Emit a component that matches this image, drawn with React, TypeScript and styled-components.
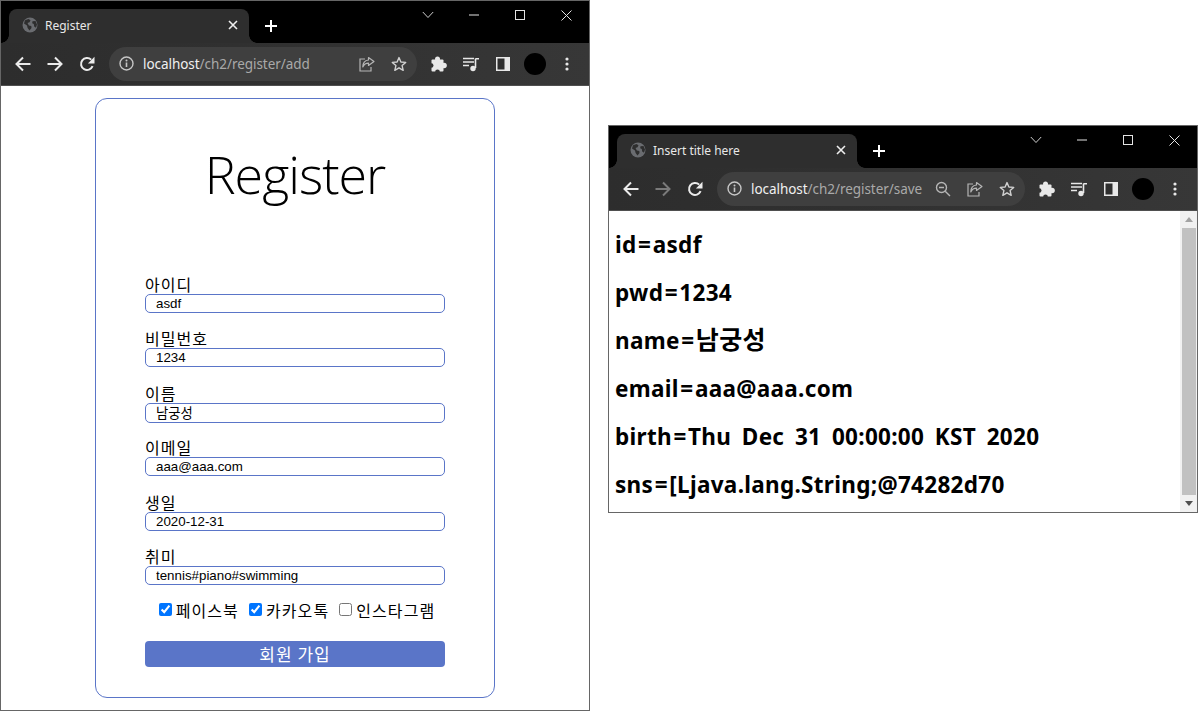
import React from "react";
import styled, { createGlobalStyle } from "styled-components";

const Global = createGlobalStyle`
  html, body { margin: 0; padding: 0; background: #fff; }
  body { width: 1199px; height: 711px; overflow: hidden; font-family: "Noto Sans", "Noto Sans CJK KR", sans-serif; }
  * { box-sizing: border-box; }
`;

const Desktop = styled.div`
  position: relative;
  width: 1199px;
  height: 711px;
  background: #fff;
  overflow: hidden;
`;

const Win = styled.section<{ $x: number; $y: number; $w: number; $h: number }>`
  position: absolute;
  left: ${(p) => p.$x}px;
  top: ${(p) => p.$y}px;
  width: ${(p) => p.$w}px;
  height: ${(p) => p.$h}px;
  display: flex;
  flex-direction: column;
  background: #fff;
  &::after {
    content: "";
    position: absolute;
    inset: 0;
    border: 1px solid #666;
    pointer-events: none;
  }
`;

const TabBar = styled.header`
  height: 43px;
  flex: none;
  background: #000;
  display: flex;
  align-items: flex-end;
  padding-left: 9px;
`;

const Tab = styled.div`
  position: relative;
  width: 240px;
  height: 34px;
  background: #2e2e2e;
  border-radius: 8px 8px 0 0;
  display: flex;
  align-items: center;
  padding: 0 8px 2px 13px;
  color: #e8e8e8;
  font: 12px "Noto Sans", sans-serif;
  &::before, &::after {
    content: "";
    position: absolute;
    bottom: 0;
    width: 8px;
    height: 8px;
  }
  &::before { left: -8px; background: radial-gradient(circle at 0 0, #000 7.5px, #2e2e2e 8px); }
  &::after { right: -8px; background: radial-gradient(circle at 100% 0, #000 7.5px, #2e2e2e 8px); }
`;

const TabTitle = styled.span`
  flex: 1;
  margin-left: 7px;
  white-space: nowrap;
`;

const NewTab = styled.div`
  width: 16px;
  height: 16px;
  margin: 0 0 9px 14px;
  color: #fff;
  display: flex;
`;

const Spacer = styled.div`
  flex: 1;
`;

const WinControls = styled.div`
  align-self: flex-start;
  display: flex;
  margin-right: 1px;
`;

const WinBtn = styled.div`
  width: 46px;
  height: 30px;
  display: flex;
  align-items: center;
  justify-content: center;
  color: #e4e4e4;
`;

const Toolbar = styled.nav`
  height: 43px;
  flex: none;
  display: flex;
  align-items: center;
  padding: 0 0 1px 7px;
  background: linear-gradient(90deg, #2d2d2d 0%, #303030 40%, #373737 100%);
  border-bottom: 1px solid #4f4f4f;
`;

const NavBtn = styled.div<{ $dim?: boolean }>`
  width: 32px;
  height: 32px;
  flex: none;
  display: flex;
  align-items: center;
  justify-content: center;
  color: ${(p) => (p.$dim ? "#7a7a7a" : "#ebebeb")};
`;

const ExtBtn = styled(NavBtn)`
  margin-left: 6px;
`;

const Omnibox = styled.div`
  width: 308px;
  height: 34px;
  margin: 0 0 0 6px;
  flex: none;
  border-radius: 17px;
  background: #3f3f3f;
  display: flex;
  align-items: center;
  padding: 0 2px 0 8px;
  overflow: hidden;
`;

const OmniIcon = styled.div`
  width: 18px;
  flex: none;
  display: flex;
  justify-content: center;
  color: #c6c6c6;
`;

const Url = styled.div`
  flex: 1;
  margin-left: 8px;
  font: 13.5px "Noto Sans", sans-serif;
  letter-spacing: -0.05px;
  color: #a9a9a9;
  white-space: nowrap;
  overflow: hidden;
`;

const Host = styled.span`
  color: #f0f0f0;
`;

const Trail = styled.div`
  width: 32px;
  flex: none;
  display: flex;
  justify-content: center;
  color: #b5b5b5;
`;

const Avatar = styled.div`
  width: 22px;
  height: 22px;
  margin: 0 5px;
  flex: none;
  border-radius: 50%;
  background: #000;
`;

const Page = styled.main`
  flex: 1;
  min-height: 0;
  display: flex;
  justify-content: center;
  align-items: flex-start;
  padding-top: 12px;
`;

const Card = styled.form`
  width: 400px;
  height: 600px;
  border: 1px solid #5a75c8;
  border-radius: 12px;
  padding: 0 49px;
  display: flex;
  flex-direction: column;
`;

const Title = styled.h1`
  margin: 38px 0 0;
  height: 73px;
  text-align: center;
  font: 300 52px/73px "Open Sans", "Noto Sans", sans-serif;
  letter-spacing: -1px;
  color: #000;
`;

const Fields = styled.div`
  margin-top: 64px;
  display: flex;
  flex-direction: column;
  gap: 15.4px;
`;

const Field = styled.label`
  display: flex;
  flex-direction: column;
  height: 39px;
  font: 16px/20px "Noto Sans CJK KR", sans-serif;
  letter-spacing: 1px;
  color: #000;
`;

const Input = styled.input<{ $tall?: boolean }>`
  width: 300px;
  height: ${(p) => (p.$tall ? 20 : 19)}px;
  flex: none;
  border: 1px solid #5a75c8;
  border-radius: 5px;
  padding: 0 0 0 10px;
  outline: none;
  background: #fff;
  color: #000;
  font: 13.33px "Liberation Sans", "Noto Sans CJK KR", sans-serif;
  letter-spacing: 0;
`;

const Checks = styled.div`
  margin-top: 14px;
  height: 22px;
  padding-left: 4px;
  display: flex;
  justify-content: center;
  align-items: center;
  gap: 10px;
  font: 16px/22px "Noto Sans CJK KR", sans-serif;
  letter-spacing: 1.1px;
`;

const Check = styled.label`
  display: flex;
  align-items: center;
  gap: 4px;
  white-space: nowrap;
`;

const Box = styled.input`
  width: 13px;
  height: 13px;
  margin: 0;
`;

const Submit = styled.button`
  margin-top: 20px;
  width: 300px;
  height: 26px;
  border: 0;
  border-radius: 4px;
  padding: 0;
  background: #5a75c8;
  color: #fff;
  font: 17px/26px "Noto Sans CJK KR", sans-serif;
  letter-spacing: 1px;
`;

const Result = styled.main`
  flex: 1;
  min-height: 0;
  display: flex;
  padding-right: 1px;
  padding-bottom: 1px;
`;

const Output = styled.div`
  flex: 1;
  padding: 10px 0 0 7px;
  display: flex;
  flex-direction: column;
`;

const Line = styled.h3`
  margin: 0;
  height: 48px;
  font: 700 22.5px/48px "Noto Sans", "Noto Sans CJK KR", sans-serif;
  letter-spacing: 0.3px;
  word-spacing: 4.5px;
  white-space: nowrap;
  color: #000;
`;

const Eq = styled.span`
  margin: 0 1.5px;
`;

const Ko = styled.span`
  font-size: 25px;
  line-height: 0;
  font-family: "Noto Sans CJK KR", sans-serif;
`;

const Scrollbar = styled.div`
  width: 17px;
  flex: none;
  background: #f1f1f1;
  display: flex;
  flex-direction: column;
`;

const ArrowBox = styled.div`
  height: 17px;
  flex: none;
  display: flex;
  align-items: center;
  justify-content: center;
`;

const Thumb = styled.div`
  flex: 1;
  background: #c1c1c1;
  margin: 0 1px 0 2px;
`;

const Globe = () => (
  <svg width="16" height="16" viewBox="0 0 16 16">
    <circle cx="8" cy="8" r="7.5" fill="#6a6c70" />
    <path d="M3 3.2 6.5 2l2 1.2-1 2-2 .8 1.4 2.4 2.4.6.2 2-2 2.6L5.6 11 5 8.6 2 6.4zM10.5 4.2l3-.2 1.5 3.5-1 3.2-1.8-1.2-.4-2.5-1.6-.8z" fill="#2e2e2e" />
  </svg>
);

const CloseSmall = () => (
  <svg width="16" height="16" viewBox="0 0 16 16" style={{ color: "#eee" }}>
    <path d="M4 4l8 8M12 4l-8 8" stroke="currentColor" strokeWidth="1.6" />
  </svg>
);

const Plus = () => (
  <svg width="16" height="16" viewBox="0 0 16 16">
    <path d="M8 2v12M2 8h12" stroke="currentColor" strokeWidth="2" />
  </svg>
);

const Back = () => (
  <svg width="18" height="18" viewBox="0 0 18 18" fill="none">
    <path d="M16.5 9H2.5M9 2.5 2.5 9 9 15.5" stroke="currentColor" strokeWidth="2" />
  </svg>
);

const Forward = () => (
  <svg width="18" height="18" viewBox="0 0 18 18" fill="none">
    <path d="M1.5 9h14M9 2.5 15.5 9 9 15.5" stroke="currentColor" strokeWidth="2" />
  </svg>
);

const Reload = () => (
  <svg width="16" height="16" viewBox="0 0 16 16" fill="none">
    <path d="M13.6 10.2A6 6 0 1 1 12.2 3.600" stroke="currentColor" strokeWidth="2" />
    <path d="M15.500 .8v6.600H8.900z" fill="currentColor" />
  </svg>
);

const Info = () => (
  <svg width="15" height="15" viewBox="0 0 15 15" fill="none">
    <circle cx="7.5" cy="7.5" r="6.5" stroke="currentColor" strokeWidth="1.4" />
    <path d="M7.5 6.6v4.4" stroke="currentColor" strokeWidth="1.6" />
    <circle cx="7.5" cy="4.4" r="1" fill="currentColor" />
  </svg>
);

const Search = () => (
  <svg width="16" height="16" viewBox="0 0 16 16" fill="none">
    <circle cx="6.5" cy="6.5" r="5" stroke="currentColor" strokeWidth="1.4" />
    <path d="M10.2 10.2 15 15M4 6.5h5" stroke="currentColor" strokeWidth="1.4" />
  </svg>
);

const Share = () => (
  <svg width="16" height="16" viewBox="0 0 16 16" fill="none">
    <path d="M6 3H1v12h11v-4" stroke="currentColor" strokeWidth="1.2" />
    <path d="M9.5 1.5 15 5.4 9.5 9.4V7.2C7 7.2 5 8.4 3.8 11c0-4 2-6.6 5.7-7z" stroke="currentColor" strokeWidth="1.2" strokeLinejoin="round" />
  </svg>
);

const Star = () => (
  <svg width="16" height="16" viewBox="0 0 16 16" fill="none">
    <path d="M8 1.6l1.9 4.4 4.8.4-3.6 3.2 1.1 4.7L8 11.8l-4.2 2.5 1.1-4.7L1.3 6.4l4.8-.4z" stroke="#d0d0d0" strokeWidth="1.4" strokeLinejoin="round" />
  </svg>
);

const Puzzle = () => (
  <svg width="16" height="16" viewBox="0 0 16 16">
    <rect x="0.500" y="3.500" width="12" height="12" rx="1" fill="#e8e8e8" />
    <circle cx="6.500" cy="3" r="2.500" fill="#e8e8e8" />
    <circle cx="13" cy="9.500" r="2.800" fill="#e8e8e8" />
    <circle cx="6.500" cy="15.800" r="2.300" fill="#333" />
    <circle cx="0.200" cy="9.500" r="2.300" fill="#333" />
  </svg>
);

const Queue = () => (
  <svg width="16" height="16" viewBox="0 0 16 16" fill="none">
    <path d="M0 2.500h11M0 6h11M0 9.500h6" stroke="#e8e8e8" strokeWidth="1.400" />
    <path d="M12.500 2.500V12" stroke="#e8e8e8" strokeWidth="1.600" />
    <path d="M12.500 2H16v1.500h-3.500z" fill="#e8e8e8" />
    <circle cx="10" cy="12.500" r="2.700" fill="#e8e8e8" />
  </svg>
);

const Panel = () => (
  <svg width="14" height="14" viewBox="0 0 14 14">
    <rect x="0" y="0" width="14" height="14" fill="#e8e8e8" />
    <rect x="1.500" y="1.500" width="7" height="11" fill="#2e2e2e" />
  </svg>
);

const Kebab = () => (
  <svg width="4" height="14" viewBox="0 0 4 14">
    <circle cx="2" cy="2" r="1.600" fill="#e8e8e8" />
    <circle cx="2" cy="7" r="1.600" fill="#e8e8e8" />
    <circle cx="2" cy="12" r="1.600" fill="#e8e8e8" />
  </svg>
);

const Chevron = () => (
  <svg width="12" height="8" viewBox="0 0 12 8" fill="none">
    <path d="M.8 1 6 6.500 11.200 1" stroke="currentColor" strokeWidth="0.900" />
  </svg>
);

const Minimize = () => (
  <svg width="11" height="2" viewBox="0 0 11 2"><path d="M0 1h10" stroke="currentColor" /></svg>
);

const Maximize = () => (
  <svg width="10" height="10" viewBox="0 0 10 10" fill="none">
    <rect x=".5" y=".5" width="9" height="9" stroke="currentColor" />
  </svg>
);

const CloseWin = () => (
  <svg width="11" height="11" viewBox="0 0 11 11" fill="none">
    <path d="M.5.500l10 10M10.500.500l-10 10" stroke="currentColor" />
  </svg>
);

const UpArrow = () => (
  <svg width="8" height="5" viewBox="0 0 8 5"><path d="M4 0l4 5H0z" fill="#a3a3a3" /></svg>
);

const DownArrow = () => (
  <svg width="8" height="5" viewBox="0 0 8 5"><path d="M0 0h8L4 5z" fill="#505050" /></svg>
);

function Chrome({ title, host, path, forwardDim, zoomed }: { title: string; host: string; path: string; forwardDim?: boolean; zoomed?: boolean }) {
  return (
    <>
      <TabBar>
        <Tab>
          <Globe />
          <TabTitle>{title}</TabTitle>
          <CloseSmall />
        </Tab>
        <NewTab><Plus /></NewTab>
        <Spacer />
        <WinControls>
          <WinBtn><Chevron /></WinBtn>
          <WinBtn><Minimize /></WinBtn>
          <WinBtn><Maximize /></WinBtn>
          <WinBtn><CloseWin /></WinBtn>
        </WinControls>
      </TabBar>
      <Toolbar>
        <NavBtn><Back /></NavBtn>
        <NavBtn $dim={forwardDim}><Forward /></NavBtn>
        <NavBtn><Reload /></NavBtn>
        <Omnibox>
          <OmniIcon><Info /></OmniIcon>
          <Url><Host>{host}</Host>{path}</Url>
          {zoomed && <Trail><Search /></Trail>}
          <Trail><Share /></Trail>
          <Trail><Star /></Trail>
        </Omnibox>
        <ExtBtn><Puzzle /></ExtBtn>
        <NavBtn><Queue /></NavBtn>
        <NavBtn><Panel /></NavBtn>
        <Avatar />
        <NavBtn><Kebab /></NavBtn>
      </Toolbar>
    </>
  );
}

const fields = [
  { label: "아이디", value: "asdf" },
  { label: "비밀번호", value: "1234" },
  { label: "이름", value: "남궁성", tall: true },
  { label: "이메일", value: "aaa@aaa.com" },
  { label: "생일", value: "2020-12-31" },
  { label: "취미", value: "tennis#piano#swimming" },
];

const checks = [
  { label: "페이스북", checked: true },
  { label: "카카오톡", checked: true },
  { label: "인스타그램", checked: false },
];

const lines: { key: string; value: string; ko?: boolean }[] = [
  { key: "id", value: "asdf" },
  { key: "pwd", value: "1234" },
  { key: "name", value: "남궁성", ko: true },
  { key: "email", value: "aaa@aaa.com" },
  { key: "birth", value: "Thu Dec 31 00:00:00 KST 2020" },
  { key: "sns", value: "[Ljava.lang.String;@74282d70" },
];

export default function App() {
  return (
    <Desktop>
      <Global />
      <Win $x={0} $y={0} $w={590} $h={711}>
        <Chrome title="Register" host="localhost" path="/ch2/register/add" />
        <Page>
          <Card onSubmit={(e) => e.preventDefault()}>
            <Title>Register</Title>
            <Fields>
              {fields.map((f) => (
                <Field key={f.label}>
                  {f.label}
                  <Input $tall={f.tall} value={f.value} readOnly />
                </Field>
              ))}
            </Fields>
            <Checks>
              {checks.map((c) => (
                <Check key={c.label}>
                  <Box type="checkbox" defaultChecked={c.checked} />
                  {c.label}
                </Check>
              ))}
            </Checks>
            <Submit type="button">회원 가입</Submit>
          </Card>
        </Page>
      </Win>
      <Win $x={608} $y={125} $w={590} $h={388}>
        <Chrome title="Insert title here" host="localhost" path="/ch2/register/save" forwardDim zoomed />
        <Result>
          <Output>
            {lines.map((l) => (
              <Line key={l.key}>
                {l.key}
                <Eq>=</Eq>
                {l.ko ? <Ko>{l.value}</Ko> : l.value}
              </Line>
            ))}
          </Output>
          <Scrollbar>
            <ArrowBox><UpArrow /></ArrowBox>
            <Thumb />
            <ArrowBox><DownArrow /></ArrowBox>
          </Scrollbar>
        </Result>
      </Win>
    </Desktop>
  );
}
